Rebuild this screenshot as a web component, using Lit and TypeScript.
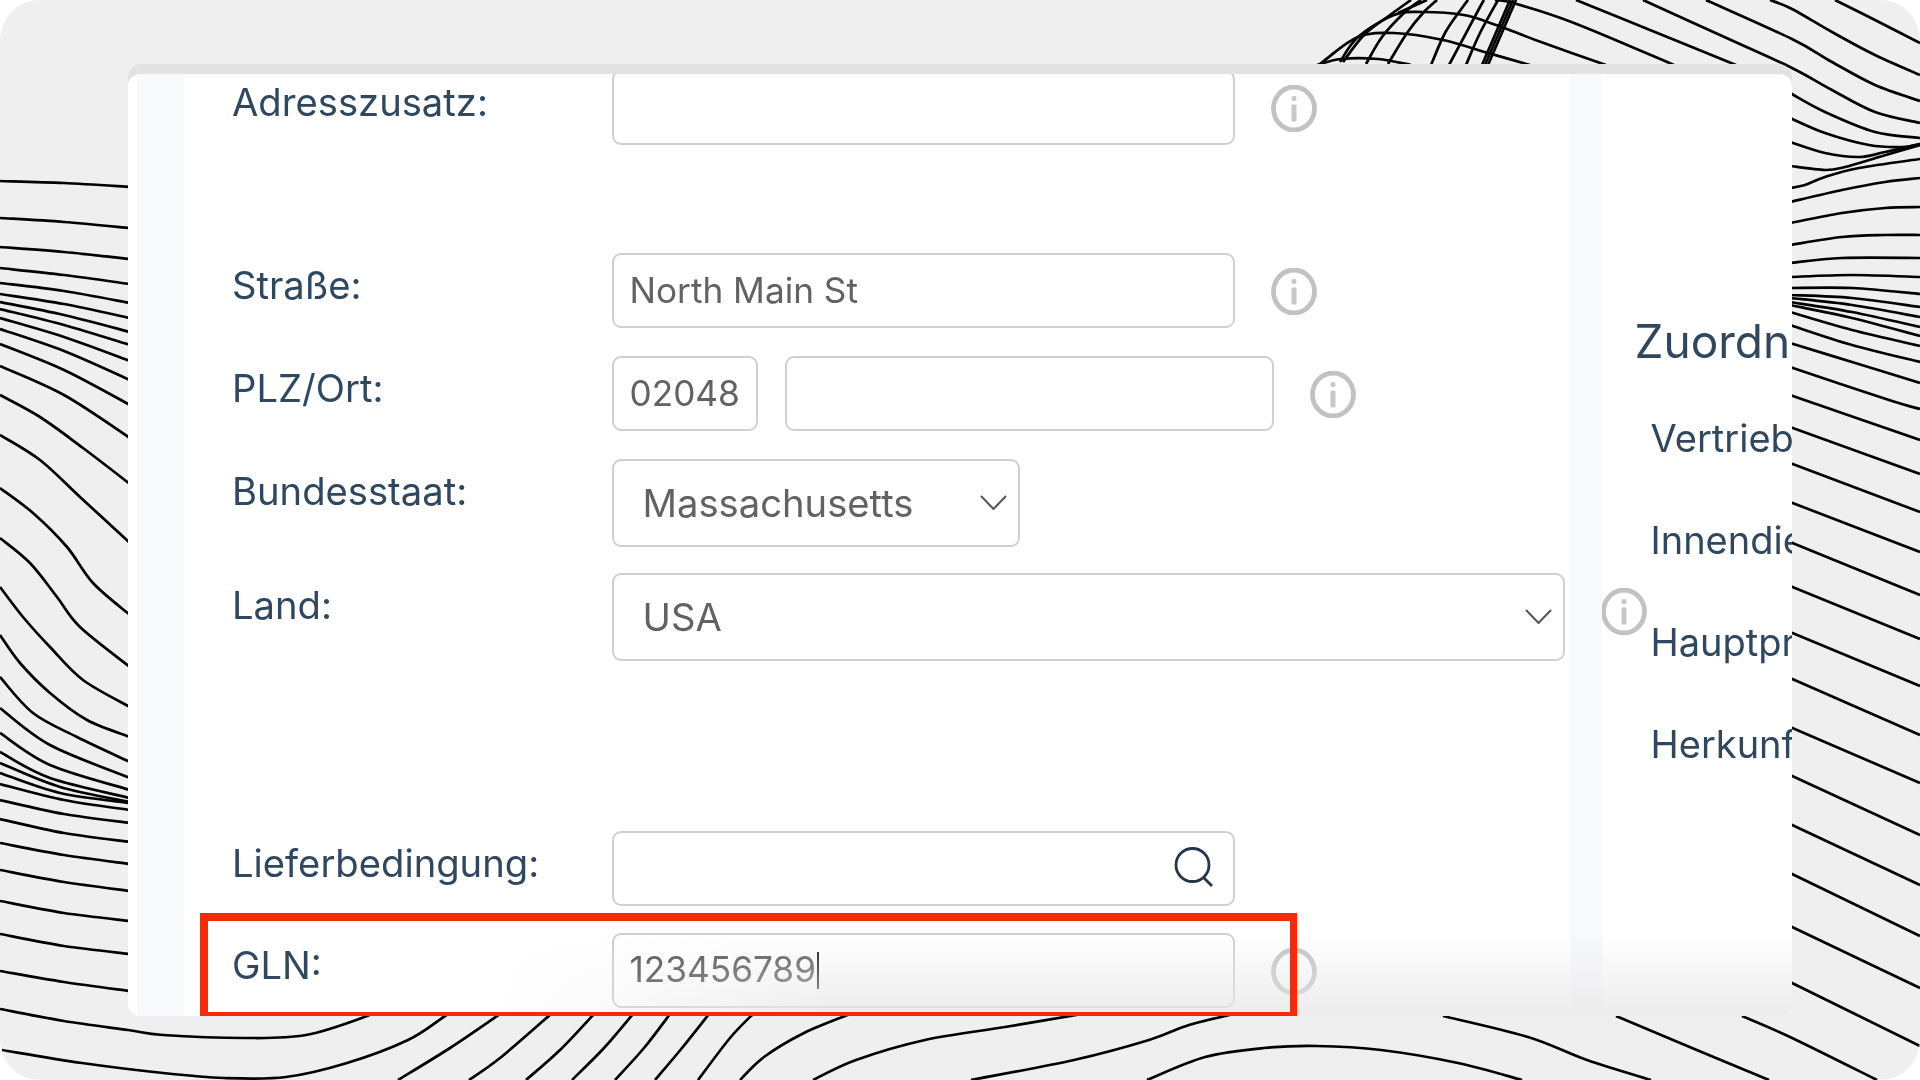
import { LitElement, html, css, svg } from 'lit';
import { customElement } from 'lit/decorators.js';

type Pt = number[];

const CURVES: Pt[][] = [
  // left edge
  [[0,181],[64,183],[130,187]],
  [[0,218],[64,222],[130,228]],
  [[0,247],[64,252],[130,259]],
  [[0,268],[64,275],[130,284]],
  [[0,283],[64,291],[130,303]],
  [[0,294],[64,304],[130,318]],
  [[0,302],[64,315],[130,332]],
  [[0,309],[64,325],[130,345]],
  [[0,318],[64,337],[130,361]],
  [[0,329],[64,351],[130,380]],
  [[0,344],[64,370],[130,405]],
  [[0,366],[64,395],[130,438]],
  [[0,395],[40,417],[83,448],[130,484]],
  [[0,435],[40,460],[80,497],[130,543]],
  [[0,488],[33,513],[67,547],[93,583],[130,615]],
  [[0,538],[30,563],[57,597],[80,627],[130,667]],
  [[0,587],[23,617],[50,647],[83,680],[130,707]],
  [[0,635],[20,663],[50,693],[87,720],[130,737]],
  [[0,677],[33,713],[77,737],[130,762]],
  [[0,708],[50,745],[130,778]],
  [[0,733],[50,765],[130,790]],
  [[0,752],[50,778],[130,798]],
  [[0,763],[60,787],[130,802]],
  [[0,773],[60,793],[130,803]],
  [[0,784],[64,800],[130,810]],
  [[0,800],[64,814],[130,823]],
  [[0,819],[64,833],[130,842]],
  [[0,843],[64,855],[130,864]],
  [[0,870],[64,882],[130,891]],
  [[0,901],[64,913],[130,921]],
  [[0,934],[64,946],[130,954]],
  [[0,971],[64,982],[130,991]],
  // bottom edge
  [[0,1009],[64,1021],[128,1030],[163,1035],[245,1038],[306,1035],[367,1016],[380,1008]],
  [[2,1050],[82,1063],[163,1073],[224,1078],[286,1077],[347,1063],[408,1040],[445,1016],[455,1010]],
  [[398,1080],[450,1048],[500,1014]],
  [[469,1080],[500,1058],[551,1014]],
  [[526,1080],[560,1050],[594,1014]],
  [[572,1080],[604,1048],[633,1014]],
  [[615,1080],[644,1048],[670,1014]],
  [[655,1080],[682,1048],[709,1014]],
  [[698,1080],[730,1038],[753,1014]],
  [[740,1080],[764,1057],[804,1033],[850,1014]],
  [[813,1080],[856,1060],[925,1040],[1005,1027],[1082,1014]],
  [[971,1080],[1074,1060],[1149,1040],[1189,1025],[1234,1014]],
  [[1147,1080],[1205,1057],[1264,1048],[1317,1046],[1381,1050],[1458,1063],[1522,1080]],
  [[1443,1016],[1528,1037],[1587,1060],[1651,1080]],
  [[1616,1016],[1692,1048],[1769,1080]],
  [[1742,1016],[1790,1037],[1877,1080]],
  // right edge, lower half
  [[1790,727],[1920,783]],
  [[1790,775],[1920,835]],
  [[1790,824],[1920,885]],
  [[1790,873],[1920,936]],
  [[1790,926],[1920,988]],
  [[1790,982],[1920,1046]],
  [[1790,678],[1920,735]],
  [[1790,632],[1920,686]],
  [[1790,586],[1920,639]],
  [[1790,542],[1920,595]],
  [[1790,502],[1920,552]],
  [[1790,463],[1920,512]],
  [[1790,427],[1920,474]],
  [[1790,395],[1920,440]],
  [[1790,367],[1889,400],[1920,409]],
  // right edge, upper half
  [[1835,0],[1875,20],[1920,43]],
  [[1770,0],[1792,9],[1832,32],[1875,55],[1920,75]],
  [[1706,0],[1792,39],[1832,62],[1875,85],[1920,101]],
  [[1643,0],[1731,40],[1792,68],[1832,90],[1875,112],[1920,123]],
  [[1790,93],[1825,112],[1875,132],[1920,138]],
  [[1790,118],[1825,133],[1869,145],[1902,147],[1920,144]],
  [[1790,142],[1825,153],[1859,157],[1885,152],[1920,144]],
  [[1790,166],[1825,170],[1845,167],[1879,157],[1920,145]],
  [[1790,188],[1805,185],[1825,177],[1859,168],[1920,159]],
  [[1790,202],[1842,190],[1885,182],[1920,178]],
  [[1790,223],[1842,213],[1885,208],[1920,207]],
  [[1790,245],[1842,237],[1885,235],[1920,235]],
  [[1790,263],[1842,258],[1920,258]],
  [[1790,277],[1852,275],[1920,277]],
  [[1790,288],[1852,288],[1920,294]],
  [[1790,295],[1852,298],[1920,307]],
  [[1790,298],[1852,305],[1920,317]],
  [[1790,302],[1852,312],[1920,327]],
  [[1790,305],[1852,318],[1920,336]],
  [[1790,312],[1852,330],[1920,346]],
  [[1790,325],[1852,345],[1920,362]],
  [[1790,343],[1852,362],[1920,383]],
  // mesh at the top
  [[1317,65],[1341,59],[1378,59],[1411,65]],
  [[1318,66],[1325,60],[1358,37],[1394,33],[1443,40],[1488,53],[1530,65]],
  [[1340,62],[1358,37],[1394,15],[1423,12],[1464,15],[1496,25],[1541,42],[1606,65]],
  [[1398,13],[1427,0]],
  [[1495,0],[1513,3],[1574,23],[1674,65]],
  [[1576,0],[1650,30],[1736,65]],
  [[1343,62],[1364,35],[1390,15],[1411,0]],
  [[1366,64],[1382,37],[1404,13],[1421,0]],
  [[1388,64],[1407,33],[1423,13],[1437,0]],
  [[1431,65],[1445,33],[1462,8],[1468,0]],
  [[1449,65],[1464,37],[1480,7],[1484,0]],
  [[1466,65],[1480,33],[1498,0]],
  [[1482,65],[1510,0]],
  [[1485,65],[1513,0]],
  [[1488,65],[1516,0]],
];

// Catmull-Rom through the traced points
function smooth(p: Pt[]) {
  let d = `M${p[0][0]} ${p[0][1]}`;
  for (let i = 0; i < p.length - 1; i++) {
    const a = p[i - 1] || p[i];
    const b = p[i];
    const c = p[i + 1];
    const e = p[i + 2] || c;
    const x1 = b[0] + (c[0] - a[0]) / 6;
    const y1 = b[1] + (c[1] - a[1]) / 6;
    const x2 = c[0] - (e[0] - b[0]) / 6;
    const y2 = c[1] - (e[1] - b[1]) / 6;
    d += `C${x1} ${y1} ${x2} ${y2} ${c[0]} ${c[1]}`;
  }
  return d;
}

const infoIcon = html`<svg class="info" viewBox="0 0 46 47" width="46" height="47">
  <ellipse cx="23" cy="23.5" rx="20.5" ry="21.5" fill="none" stroke="#c2c2c2" stroke-width="4.8"></ellipse>
  <rect x="20.5" y="11" width="5" height="5" rx="2" fill="#c8c8c8"></rect>
  <rect x="20.5" y="19.5" width="5" height="17" rx="1" fill="#c8c8c8"></rect>
</svg>`;

const chevron = html`<svg class="chevron" viewBox="0 0 27 15" width="27" height="15">
  <path d="M1 1L13.5 14L26 1" fill="none" stroke="#555" stroke-width="2"></path>
</svg>`;

const searchIcon = html`<svg class="search" viewBox="0 0 40 40" width="40" height="40">
  <circle cx="18.5" cy="18" r="16.5" fill="none" stroke="#26364a" stroke-width="2.8"></circle>
  <path d="M29 30L38 39" fill="none" stroke="#26364a" stroke-width="2.8"></path>
</svg>`;

@customElement('app-root')
export class AppRoot extends LitElement {
  static styles = [
    css`
    :host {
      display: block;
      width: 1920px;
      height: 1080px;
      background: #fff;
      overflow: hidden;
      font-family: Inter, "Liberation Sans", sans-serif;
    }
    .stage {
      position: relative;
      width: 1920px;
      height: 1080px;
      box-sizing: border-box;
      padding: 64px 128px;
      background: #efefef;
      border-radius: 40px;
      overflow: hidden;
    }
    .waves {
      position: absolute;
      inset: 0;
    }
    .waves path {
      fill: none;
      stroke: #000;
      stroke-width: 2.7;
    }
    .window {
      position: relative;
      height: 952px;
      padding-top: 10px;
      box-sizing: border-box;
      background: #e2e2e2;
      border-radius: 14px;
    }
    .body {
      position: relative;
      display: flex;
      height: 942px;
      padding-left: 9px;
      box-sizing: border-box;
      background: #fff;
      border-radius: 12px;
      overflow: hidden;
      filter: blur(0.5px);
    }
    .strip {
      flex: none;
      background: #f8f9fc;
    }
    .strip.left { width: 47px; }
    .strip.right { width: 32px; }
    .form {
      flex: none;
      width: 1386px;
      box-sizing: border-box;
      margin-top: -4px;
      padding-left: 48px;
    }
    .row {
      display: flex;
      align-items: flex-start;
      margin-top: 28px;
    }
    .row:first-child { margin-top: 0; }
    .row.wide { margin-top: 108px; }
    .row.snug { margin-top: 26px; }
    .row.far { margin-top: 170px; }
    .row.near { margin-top: 27px; }
    label {
      flex: none;
      width: 379.5px;
      font-size: 38.2px;
      line-height: 64px;
      color: #2f4860;
      white-space: nowrap;
    }
    .field {
      flex: none;
      display: flex;
      align-items: center;
      justify-content: space-between;
      height: 75px;
      box-sizing: border-box;
      padding: 0 16px 2px;
      background: #fff;
      border: 2.5px solid #d0d0d0;
      border-radius: 9px;
      color: #626262;
      font-size: 35.2px;
      white-space: nowrap;
    }
    .w622 { width: 623px; }
    .zip { width: 146px; }
    .city { width: 489px; margin-left: 27px; }
    .select {
      height: 88px;
      padding: 0 11px 0 29px;
      font-size: 38.2px;
    }
    .state { width: 408px; }
    .country { width: 953px; }
    .caret {
      display: inline-block;
      width: 2px;
      height: 37px;
      margin-left: 1px;
      background: #111;
      vertical-align: -7px;
    }
    .value-dark { color: #555; padding-bottom: 4px; }
    .info {
      flex: none;
      margin: 15px 0 0 36px;
    }
    .search {
      position: absolute;
      right: 19px;
      top: 14px;
    }
    .search-field { position: relative; }
    .chevron { flex: none; margin-top: -2px; }
    .side {
      flex: none;
      width: 190px;
      padding: 237px 0 0 32.5px;
      color: #2f4860;
      white-space: nowrap;
    }
    .side h2 {
      margin: 0 0 16px;
      font-size: 46px;
      line-height: 60px;
      font-weight: 400;
    }
    .side div {
      margin-left: 16px;
      font-size: 38px;
      line-height: 102px;
    }
    .fade {
      position: absolute;
      left: 0;
      right: 0;
      bottom: 0;
      height: 84px;
      background: linear-gradient(to bottom, rgba(232, 232, 232, 0), rgba(232, 232, 232, 0.8));
      -webkit-mask-image: linear-gradient(to right, transparent 22%, #000 42%);
      mask-image: linear-gradient(to right, transparent 22%, #000 42%);
    }
    .highlight {
      position: absolute;
      left: 72px;
      top: 839px;
      width: 1097px;
      height: 103px;
      box-sizing: border-box;
      border: solid #f6290c;
      border-width: 8px 7px 4px 8px;
    }
    `
  ];

  render() {
    return html`
      <div class="stage">
        <svg class="waves" width="1920" height="1080" viewBox="0 0 1920 1080">
          ${CURVES.map((c) => svg`<path d=${smooth(c)}></path>`)}
        </svg>
        <div class="window">
          <div class="body">
            <div class="strip left"></div>
            <div class="form">
              <div class="row">
                <label>Adresszusatz:</label>
                <div class="field w622"></div>
                ${infoIcon}
              </div>
              <div class="row wide">
                <label>Straße:</label>
                <div class="field w622">North Main St</div>
                ${infoIcon}
              </div>
              <div class="row">
                <label>PLZ/Ort:</label>
                <div class="field zip">02048</div>
                <div class="field city"></div>
                ${infoIcon}
              </div>
              <div class="row">
                <label>Bundesstaat:</label>
                <div class="field select state">Massachusetts ${chevron}</div>
              </div>
              <div class="row snug">
                <label>Land:</label>
                <div class="field select country">USA ${chevron}</div>
                ${infoIcon}
              </div>
              <div class="row far">
                <label>Lieferbedingung:</label>
                <div class="field w622 search-field">${searchIcon}</div>
              </div>
              <div class="row near">
                <label>GLN:</label>
                <div class="field w622 value-dark"><span>123456789<span class="caret"></span></span></div>
                ${infoIcon}
              </div>
            </div>
            <div class="strip right"></div>
            <div class="side">
              <h2>Zuordnung</h2>
              <div>Vertrieb</div>
              <div>Innendienst</div>
              <div>Hauptprodukt</div>
              <div>Herkunft</div>
            </div>
            <div class="fade"></div>
            <div class="highlight"></div>
          </div>
        </div>
      </div>
    `;
  }
}

declare global {
  interface HTMLElementTagNameMap {
    'app-root': AppRoot
  }
}
